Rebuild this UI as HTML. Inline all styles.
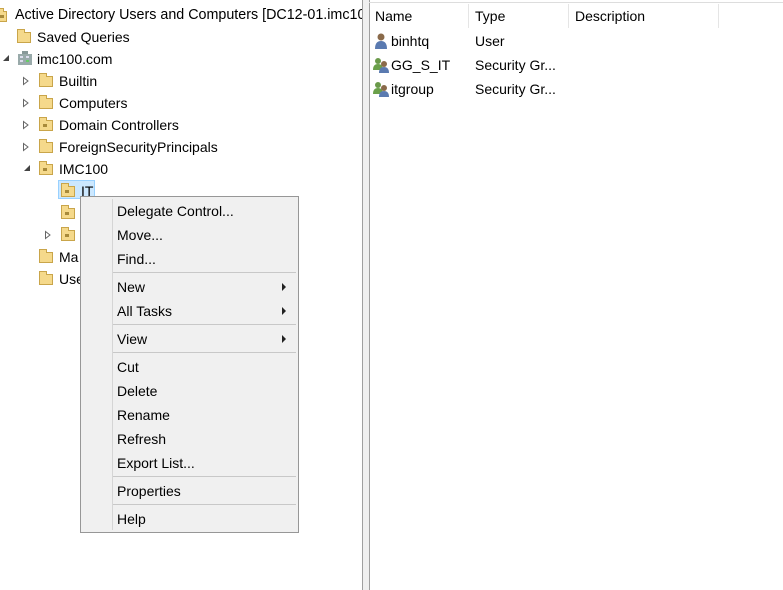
<!DOCTYPE html>
<html><head><style>
body{margin:0;width:783px;height:590px;overflow:hidden;background:#fff;font-family:"Liberation Sans",sans-serif;font-size:14px;color:#000;position:relative}
.a{position:absolute;white-space:nowrap}
.fold{position:absolute;width:14px;height:11px;background:#f5d98b;border:1px solid #c9a54a;box-sizing:border-box}
.fold:before{content:"";position:absolute;left:-1px;top:-4px;width:6px;height:3px;background:#f5d98b;border:1px solid #c9a54a;border-bottom:none}
.ou:after{content:"";position:absolute;left:3px;top:3px;width:4px;height:3px;background:#a88a3a}
.exp{position:absolute;width:0;height:0;border-left:6px solid transparent;border-bottom:6px solid #444}
.menu{position:absolute;left:80px;top:196px;width:219px;height:337px;background:#f0f0f0;border:1px solid #979797;box-sizing:border-box}
.mi{position:absolute;left:36px;font-size:14px}
.sep{position:absolute;left:32px;right:2px;height:1px;background:#c8c8c8}
.arr{position:absolute;right:12px;width:0;height:0;border-top:4px solid transparent;border-bottom:4px solid transparent;border-left:4px solid #222}
#left{position:absolute;left:0;top:0;width:362px;height:590px;overflow:hidden}
</style></head><body>
<div class="a" style="left:362px;top:0;width:6px;height:590px;background:#f0f0f0;border-left:1px solid #a0a0a0;border-right:1px solid #a0a0a0"></div>
<div class="a" style="left:369px;top:2px;width:414px;height:1px;background:#ddd"></div>
<div class="a" style="left:468px;top:4px;width:1px;height:24px;background:#e5e5e5"></div>
<div class="a" style="left:568px;top:4px;width:1px;height:24px;background:#e5e5e5"></div>
<div class="a" style="left:718px;top:4px;width:1px;height:24px;background:#e5e5e5"></div>
<div class="a" style="left:375px;top:8px">Name</div>
<div class="a" style="left:475px;top:8px">Type</div>
<div class="a" style="left:575px;top:8px">Description</div>
<svg class="a" style="left:373px;top:33px" width="16" height="16"><circle cx="8" cy="4" r="3.5" fill="#8a6a4a"/><path d="M2 16 Q2 8 8 8 Q14 8 14 16Z" fill="#5a7ab0"/></svg>
<div class="a" style="left:391px;top:33px">binhtq</div><div class="a" style="left:475px;top:33px">User</div>
<svg class="a" style="left:372px;top:57px" width="18" height="16"><circle cx="6" cy="4" r="3" fill="#6a9a4a"/><path d="M1 13 Q1 7 6 7 Q11 7 11 13Z" fill="#6aa04a"/><circle cx="12" cy="7" r="3" fill="#8a6a4a"/><path d="M7 16 Q7 10 12 10 Q17 10 17 16Z" fill="#5a7ab0"/></svg>
<div class="a" style="left:391px;top:57px">GG_S_IT</div><div class="a" style="left:475px;top:57px">Security Gr...</div>
<svg class="a" style="left:372px;top:81px" width="18" height="16"><circle cx="6" cy="4" r="3" fill="#6a9a4a"/><path d="M1 13 Q1 7 6 7 Q11 7 11 13Z" fill="#6aa04a"/><circle cx="12" cy="7" r="3" fill="#8a6a4a"/><path d="M7 16 Q7 10 12 10 Q17 10 17 16Z" fill="#5a7ab0"/></svg>
<div class="a" style="left:391px;top:81px">itgroup</div><div class="a" style="left:475px;top:81px">Security Gr...</div>

<div id="left">
<div class="fold ou" style="left:-4px;top:11px;width:11px"></div>
<div class="a" style="left:15px;top:7px;font-size:14.3px">Active Directory Users and Computers [DC12-01.imc100.com]</div>
<div class="fold" style="left:17px;top:32px"></div><div class="a" style="left:37px;top:29px">Saved Queries</div>
<div class="exp" style="left:3px;top:55px"></div>
<svg class="a" style="left:17px;top:51px" width="16" height="14"><rect x="1" y="3" width="14" height="11" fill="#9aa"/><rect x="3" y="5" width="3" height="2" fill="#dde"/><rect x="9" y="5" width="3" height="2" fill="#dde"/><rect x="3" y="9" width="3" height="2" fill="#dde"/><rect x="9" y="9" width="3" height="2" fill="#6c6"/><rect x="5" y="0" width="6" height="3" fill="#899"/></svg>
<div class="a" style="left:37px;top:51px">imc100.com</div>
<svg class="a" style="left:22px;top:76px" width="8" height="10"><path d="M1.5 1.5 L6 5 L1.5 8.5Z" fill="#fff" stroke="#666"/></svg>
<div class="fold" style="left:39px;top:76px"></div><div class="a" style="left:59px;top:73px">Builtin</div>
<svg class="a" style="left:22px;top:98px" width="8" height="10"><path d="M1.5 1.5 L6 5 L1.5 8.5Z" fill="#fff" stroke="#666"/></svg>
<div class="fold" style="left:39px;top:98px"></div><div class="a" style="left:59px;top:95px">Computers</div>
<svg class="a" style="left:22px;top:120px" width="8" height="10"><path d="M1.5 1.5 L6 5 L1.5 8.5Z" fill="#fff" stroke="#666"/></svg>
<div class="fold ou" style="left:39px;top:120px"></div><div class="a" style="left:59px;top:117px">Domain Controllers</div>
<svg class="a" style="left:22px;top:142px" width="8" height="10"><path d="M1.5 1.5 L6 5 L1.5 8.5Z" fill="#fff" stroke="#666"/></svg>
<div class="fold" style="left:39px;top:142px"></div><div class="a" style="left:59px;top:139px">ForeignSecurityPrincipals</div>
<div class="exp" style="left:24px;top:165px"></div><div class="fold ou" style="left:39px;top:164px"></div><div class="a" style="left:59px;top:161px">IMC100</div>
<div class="a" style="left:58px;top:180px;width:37px;height:19px;background:#cce8ff;border:1px solid #99d1ff;box-sizing:border-box"></div>
<div class="fold ou" style="left:61px;top:186px"></div><div class="a" style="left:81px;top:183px">IT</div>
<div class="fold ou" style="left:61px;top:208px"></div>
<svg class="a" style="left:44px;top:230px" width="8" height="10"><path d="M1.5 1.5 L6 5 L1.5 8.5Z" fill="#fff" stroke="#666"/></svg>
<div class="fold ou" style="left:61px;top:230px"></div>
<div class="fold" style="left:39px;top:252px"></div><div class="a" style="left:59px;top:249px">Ma</div>
<div class="fold" style="left:39px;top:274px"></div><div class="a" style="left:59px;top:271px">Use</div>
</div>

<div class="menu">
<div class="a" style="left:31px;top:2px;width:1px;height:331px;background:#d5d5d5"></div>
<div class="mi" style="top:6px">Delegate Control...</div>
<div class="mi" style="top:30px">Move...</div>
<div class="mi" style="top:54px">Find...</div>
<div class="sep" style="top:75px"></div>
<div class="mi" style="top:82px">New</div><div class="arr" style="top:86px"></div>
<div class="mi" style="top:106px">All Tasks</div><div class="arr" style="top:110px"></div>
<div class="sep" style="top:127px"></div>
<div class="mi" style="top:134px">View</div><div class="arr" style="top:138px"></div>
<div class="sep" style="top:155px"></div>
<div class="mi" style="top:162px">Cut</div>
<div class="mi" style="top:186px">Delete</div>
<div class="mi" style="top:210px">Rename</div>
<div class="mi" style="top:234px">Refresh</div>
<div class="mi" style="top:258px">Export List...</div>
<div class="sep" style="top:279px"></div>
<div class="mi" style="top:286px">Properties</div>
<div class="sep" style="top:307px"></div>
<div class="mi" style="top:314px">Help</div>
</div>
</body></html>
